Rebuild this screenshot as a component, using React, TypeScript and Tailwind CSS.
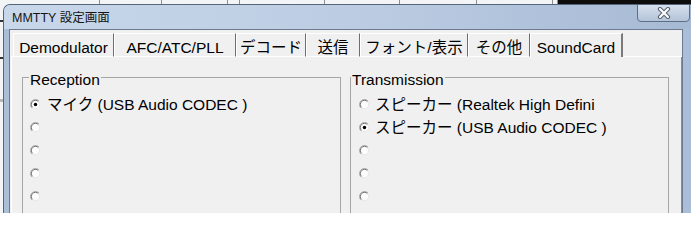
const tabs = [
  { label: 'Demodulator', w: 'w-[101px]' },
  { label: 'AFC/ATC/PLL', w: 'w-[122px]' },
  { label: 'デコード', w: 'w-[70px]' },
  { label: '送信', w: 'w-[54px]' },
  { label: 'フォント/表示', w: 'w-[108px]' },
  { label: 'その他', w: 'w-[62px]' },
  { label: 'SoundCard', w: 'w-[93px]', active: true },
];

const reception = ['マイク (USB Audio CODEC )', '', '', '', ''];
const transmission = ['スピーカー (Realtek High Defini', 'スピーカー (USB Audio CODEC )', '', '', ''];

const Radio = ({ checked }: { checked?: boolean }) => (
  <svg width="11" height="11" viewBox="0 0 12 12" className="shrink-0">
    <circle cx="6" cy="6" r="5" fill="#fdfdfd" />
    <path d="M2.1 9.9A5.5 5.5 0 0 1 9.9 2.1" fill="none" stroke="#a8a8a8" />
    <path d="M2.8 9.2A4.5 4.5 0 0 1 9.2 2.8" fill="none" stroke="#666" />
    <path d="M9.2 2.8A4.5 4.5 0 0 1 2.8 9.2" fill="none" stroke="#e2e2e2" />
    {checked && <circle cx="6" cy="6" r="1.9" fill="#000" />}
  </svg>
);

const GroupBox = ({
  title,
  items,
  checked,
  legendClass,
  padClass,
  gapClass,
}: {
  title: string;
  items: string[];
  checked: number;
  legendClass: string;
  padClass: string;
  gapClass: string;
}) => (
  <fieldset className="w-[319px] h-[170px] shrink-0 border border-[#a6a6a6]">
    <legend className={`leading-[18px] pt-[6px] px-[1px] ${legendClass}`}>{title}</legend>
    <div className={`flex flex-col pt-[4px] ${padClass}`}>
      {items.map((text, i) => (
        <div key={i} className={`h-[23px] flex items-center ${gapClass}`}>
          <Radio checked={i === checked} />
          <span className="leading-[18px] whitespace-nowrap">{text}</span>
        </div>
      ))}
    </div>
  </fieldset>
);

export default function App() {
  return (
    <div className="w-[691px] h-[213px] overflow-hidden flex flex-col bg-[#f3f4f6] font-['Liberation_Sans','Noto_Sans_CJK_JP',sans-serif] text-black">
      {/* window behind */}
      <div className="h-[4px] shrink-0 flex">
        <div className="w-[100px] border-r border-[#8a8f96]" />
        <div className="w-[62px] border-r border-[#8a8f96]" />
        <div className="w-[66px] border-r border-[#8a8f96]" />
        <div className="w-[12px] border-r border-[#8a8f96]" />
        <div className="w-[85px] border-r border-[#8a8f96]" />
        <div className="w-[75px] border-r border-[#8a8f96]" />
        <div className="w-[77px] border-r border-[#8a8f96]" />
        <div className="w-[76px] border-r border-[#8a8f96]" />
        <div className="w-[5px] border-r border-[#8a8f96]" />
        <div className="flex-1 bg-[#0d0d0d]" />
      </div>

      <div className="flex h-[240px] shrink-0">
        <div className="w-[3px] shrink-0 flex flex-col">
          <div className="h-[16px]" />
          <div className="h-[2px] bg-[#333]" />
          <div className="h-[35px]" />
          <div className="h-[2px] bg-[#333]" />
          <div className="h-[40px]" />
          <div className="h-[3px] bg-[#b8b8b8]" />
        </div>

        {/* MMTTY window */}
        <div className="flex-1 flex flex-col rounded-tl-[7px] border-l border-t border-[#566579] bg-[#abbed8] overflow-hidden">
          <div className="h-[24px] shrink-0 flex items-start bg-gradient-to-r from-[#c8d7ea] via-[#bccde3] to-[#a7bad5]">
            <div className="pl-[8px] pt-[6px] text-[12.5px] leading-[15px] text-[#151515]">MMTTY 設定画面</div>
            <div className="ml-auto mr-[1px] w-[53px] h-[18px] -mt-[1px] rounded-b-[4px] border border-[#5f6f86] bg-gradient-to-b from-[#d6e0ed] to-[#b4c3d8] flex items-center justify-center">
              <svg width="14" height="12" viewBox="0 0 14 12">
                <path d="M3 2L11 10M11 2L3 10" stroke="#56606e" strokeWidth="4.2" strokeLinecap="round" />
                <path d="M3 2L11 10M11 2L3 10" stroke="#fff" strokeWidth="2.2" strokeLinecap="round" />
              </svg>
            </div>
          </div>

          <div className="flex-1 flex pl-[5px] pr-[8px] min-h-0">
            <div className="flex-1 flex flex-col border border-[#6c7b90] bg-[#f0f0f0] min-h-0 pl-[1px]">
              <div className="flex pt-[3px] text-[15.5px]">
                <div className="w-[2px] h-[24px] border-b border-white" />
                {tabs.map((t) => (
                  <div
                    key={t.label}
                    className={`${t.w} h-[24px] shrink-0 flex justify-center pt-[5px] border-l border-t border-white ${
                      t.active ? 'border-r-2 border-r-[#7a7a7a]' : 'border-r border-r-[#6e6e6e] border-b border-b-white'
                    }`}
                  >
                    <span className="leading-[18px] whitespace-nowrap">{t.label}</span>
                  </div>
                ))}
                <div className="flex-1 h-[24px] border-b border-white" />
              </div>

              <div className="flex-1 flex gap-[9px] pl-[10px] pt-[8px] border-l border-white border-r border-r-[#8c8c8c] text-[15.5px]">
                <GroupBox
                  title="Reception"
                  items={reception}
                  checked={0}
                  legendClass="ml-[6px]"
                  padClass="pl-[7px]"
                  gapClass="gap-[6px]"
                />
                <GroupBox
                  title="Transmission"
                  items={transmission}
                  checked={1}
                  legendClass="ml-[0px]"
                  padClass="pl-[8px]"
                  gapClass="gap-[5px]"
                />
              </div>
            </div>
          </div>
        </div>
      </div>
    </div>
  );
}
